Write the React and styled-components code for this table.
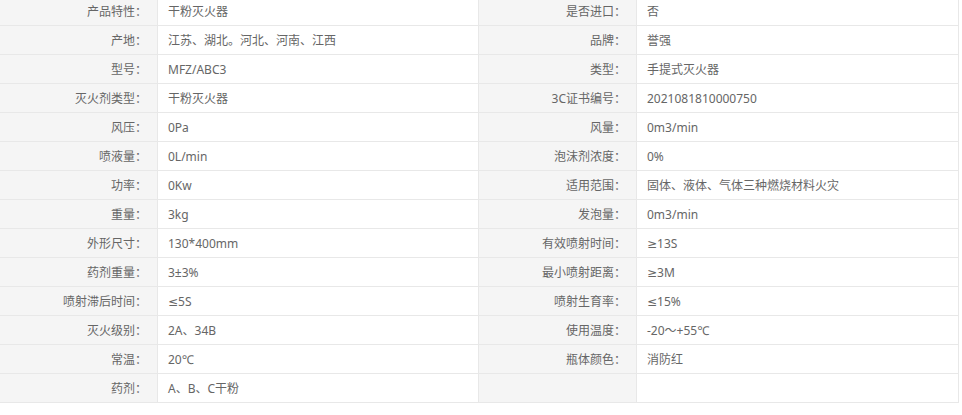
import React from 'react'
import styled, { createGlobalStyle } from 'styled-components'

const GlobalStyle = createGlobalStyle`
html, body {
  margin: 0;
  padding: 0;
  background: #fff;
  overflow: hidden;
}
`

const SpecTable = styled.div`
display: grid;
grid-template-columns: 158px 321px 158px 322px;
width: 959px;
margin-top: -4px;
border-top: 1px solid #e8e8e8;
font-family: "Noto Sans", "DejaVu Sans", "Noto Sans CJK SC", sans-serif;
font-size: 12px;
color: #666;
`

const Cell = styled.div`
height: 26px;
line-height: 26px;
padding: 2px 10px 0;
box-sizing: content-box;
border-right: 1px solid #e8e8e8;
border-bottom: 1px solid #e8e8e8;
white-space: nowrap;
overflow: hidden;
`

const Label = styled(Cell)`
background: #f5f5f5;
text-align: right;
`

const Value = styled(Cell)`
background: #fff;
text-align: left;
`

const specs = [
  ['产品特性', '干粉灭火器', '是否进口', '否'],
  ['产地', '江苏、湖北。河北、河南、江西', '品牌', '誉强'],
  ['型号', 'MFZ/ABC3', '类型', '手提式灭火器'],
  ['灭火剂类型', '干粉灭火器', '3C证书编号', '2021081810000750'],
  ['风压', '0Pa', '风量', '0m3/min'],
  ['喷液量', '0L/min', '泡沫剂浓度', '0%'],
  ['功率', '0Kw', '适用范围', '固体、液体、气体三种燃烧材料火灾'],
  ['重量', '3kg', '发泡量', '0m3/min'],
  ['外形尺寸', '130*400mm', '有效喷射时间', '≥13S'],
  ['药剂重量', '3±3%', '最小喷射距离', '≥3M'],
  ['喷射滞后时间', '≤5S', '喷射生育率', '≤15%'],
  ['灭火级别', '2A、34B', '使用温度', '-20～+55℃'],
  ['常温', '20℃', '瓶体颜色', '消防红'],
  ['药剂', 'A、B、C干粉', '', ''],
]

const Spec = ({ label }) => <Label>{label ? `${label}：` : ''}</Label>

export default function App() {
  return (
    <>
      <GlobalStyle />
      <SpecTable>
        {specs.map(([l1, v1, l2, v2], i) => (
          <React.Fragment key={i}>
            <Spec label={l1} />
            <Value>{v1}</Value>
            <Spec label={l2} />
            <Value>{v2}</Value>
          </React.Fragment>
        ))}
      </SpecTable>
    </>
  )
}
